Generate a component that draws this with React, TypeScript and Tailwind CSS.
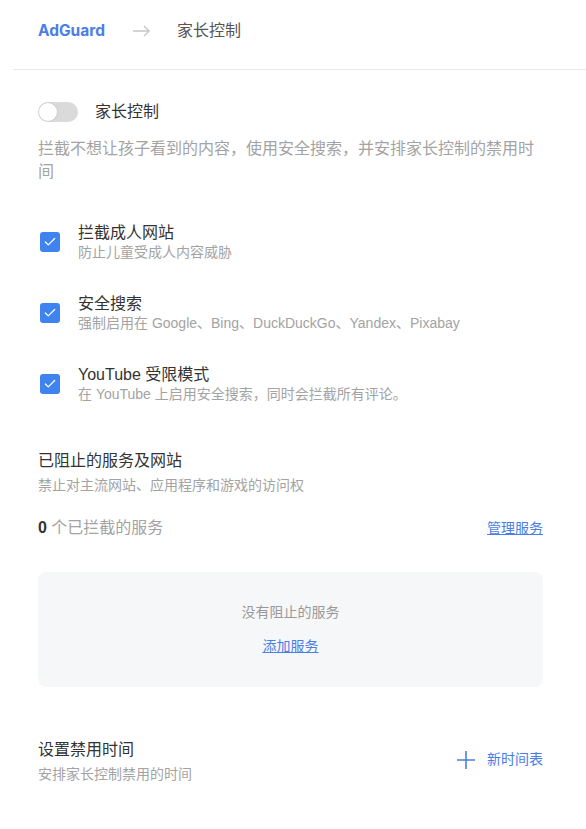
import { Check } from "lucide-react";

const font = { fontFamily: '"Liberation Sans", "Noto Sans CJK SC", sans-serif' };
const brand = { fontFamily: 'Inter, "Noto Sans CJK SC", sans-serif' };

const items = [
  { title: "拦截成人网站", desc: "防止儿童受成人内容威胁" },
  { title: "安全搜索", desc: "强制启用在 Google、Bing、DuckDuckGo、Yandex、Pixabay" },
  { title: "YouTube 受限模式", desc: "在 YouTube 上启用安全搜索，同时会拦截所有评论。" },
];

export default function App() {
  return (
    <div className="min-h-screen w-[586px] bg-white" style={font}>
      {/* breadcrumb */}
      <div className="ml-[13px] flex h-[70px] items-center border-b border-[#e8e8e8] pb-[7px] pl-[25px]">
        <span className="text-[15.5px] font-bold text-[#4a7ee6]" style={brand}>AdGuard</span>
        <svg className="ml-[28px]" width="17" height="12" viewBox="0 0 17 12" fill="none">
          <path d="M0 6h16M11 1l5 5-5 5" stroke="#c6c6c6" strokeWidth="1.4" />
        </svg>
        <span className="ml-[27px] text-[16px] text-[#555]">家长控制</span>
      </div>

      <div className="w-[581px] px-[38px] pt-[30px]">
        <div className="flex items-center gap-[17px]">
          <div className="flex h-[20px] w-[40px] items-center rounded-full bg-[#dadada] px-[1px]">
            <div className="h-[18px] w-[18px] rounded-full bg-white shadow-[0_0_2px_rgba(0,0,0,0.15)]" />
          </div>
          <span className="text-[16px] text-[#333]">家长控制</span>
        </div>
        <p className="mt-[13px] text-[16px] leading-[23px] text-[#a3a3a3]">
          拦截不想让孩子看到的内容，使用安全搜索，并安排家长控制的禁用时间
        </p>

        <div className="mt-[39px] flex flex-col gap-[31px]">
          {items.map((it) => (
            <div key={it.title} className="flex items-center">
              <div className="ml-[2px] flex h-[20px] w-[20px] items-center justify-center rounded-[3px] bg-[#3f83f0]">
                <Check className="h-[14px] w-[14px] text-white" strokeWidth={2.2} />
              </div>
              <div className="ml-[18px] flex flex-col">
                <span className="text-[16px] leading-[21px] text-[#333]">{it.title}</span>
                <span className="text-[14px] leading-[19px] text-[#a3a3a3]">{it.desc}</span>
              </div>
            </div>
          ))}
        </div>

        <div className="mt-[46px]">
          <div className="text-[16px] leading-[22px] text-[#333]">已阻止的服务及网站</div>
          <div className="mt-[4px] text-[14px] leading-[19px] text-[#a3a3a3]">禁止对主流网站、应用程序和游戏的访问权</div>
        </div>

        <div className="mt-[22px] flex h-[22px] items-center justify-between">
          <span className="text-[16px] text-[#a3a3a3]">
            <b className="text-[#333]">0</b> 个已拦截的服务
          </span>
          <a className="text-[14px] text-[#4a7ee6] underline">管理服务</a>
        </div>

        <div className="mt-[33px] flex h-[115px] flex-col items-center justify-center gap-[15px] rounded-[8px] bg-[#f6f7f9]">
          <span className="text-[14px] leading-[19px] text-[#999]">没有阻止的服务</span>
          <a className="text-[14px] leading-[19px] text-[#4a7ee6] underline">添加服务</a>
        </div>

        <div className="mt-[52px] flex items-center justify-between">
          <div>
            <div className="text-[16px] leading-[22px] text-[#333]">设置禁用时间</div>
            <div className="mt-[4px] text-[14px] leading-[19px] text-[#a3a3a3]">安排家长控制禁用的时间</div>
          </div>
          <div className="flex items-center gap-[12px] pb-[4px]">
            <svg width="18" height="18" viewBox="0 0 18 18" fill="none">
              <path d="M9 0v18M0 9h18" stroke="#4a7ee6" strokeWidth="1.6" />
            </svg>
            <span className="text-[14px] text-[#4a7ee6]">新时间表</span>
          </div>
        </div>
      </div>
    </div>
  );
}
